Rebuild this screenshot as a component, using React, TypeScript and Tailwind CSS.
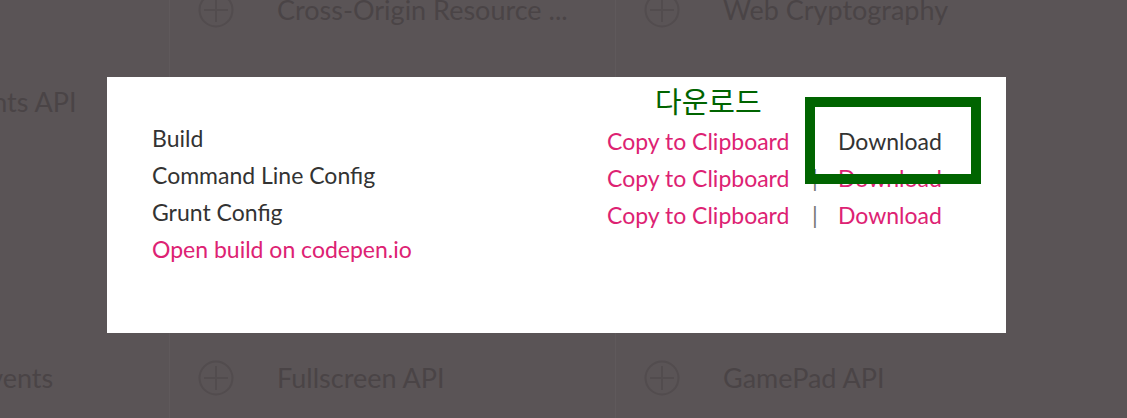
const TILES = [
  ["Vibration API", "Cross-Origin Resource ...", "Web Cryptography"],
  ["Proximity Events API", "Page Visibility", "Web Notifications"],
  ["Battery API", "Navigation Timing", "Web Audio API"],
  ["Clipboard API", "Resource Timing", "Web Sockets"],
  ["Server-sent Events", "Fullscreen API", "GamePad API"],
];

const ROWS = ["Build", "Command Line Config", "Grunt Config"];

const font = { fontFamily: "Lato, 'Noto Sans', sans-serif" };

function PlusCircle() {
  return (
    <svg width="36" height="36" viewBox="0 0 36 36" className="shrink-0">
      <circle cx="18" cy="18" r="16.5" fill="none" stroke="#524c4e" strokeWidth="2" />
      <path d="M18 6v24M6 18h24" stroke="#524c4e" strokeWidth="2" />
    </svg>
  );
}

function Tile({ label }: { label: string }) {
  return (
    <div className="h-[92px] flex items-center border-l border-[#5f595b] pl-[28px] gap-[43px]">
      <PlusCircle />
      <span className="text-[27px] text-[#4a4446] whitespace-nowrap">{label}</span>
    </div>
  );
}

export default function App() {
  return (
    <div className="relative w-[1127px] h-[418px] overflow-hidden bg-[#5a5456]" style={font}>
      <div className="-mt-[36px] -ml-[277px] grid grid-cols-[446px_446px_446px]">
        {TILES.flat().map((t, i) => (
          <Tile key={i} label={t} />
        ))}
      </div>

      <div className="absolute left-[107px] top-[77px] w-[899px] h-[256px] bg-white flex">
        <div className="pl-[45px] pt-[43px] w-[500px] text-[23px] leading-[37px] text-[#333]">
          {ROWS.map((r) => (
            <div key={r}>{r}</div>
          ))}
          <div className="text-[#dd2273]">Open build on codepen.io</div>
        </div>
        <div className="pt-[46px] text-[23px] leading-[37px]">
          {ROWS.map((r, i) => (
            <div key={r} className="flex">
              <span className="text-[#dd2273] w-[205px]">Copy to Clipboard</span>
              <span className={i === 0 ? "w-[26px] text-white" : "w-[26px] text-[#777]"}>|</span>
              <span className={i === 0 ? "text-[#333]" : "text-[#dd2273]"}>Download</span>
            </div>
          ))}
        </div>
      </div>

      <div
        className="absolute left-[655px] top-[82px] text-[29px] leading-[36px] text-[#006400]"
        style={{ fontFamily: "'Noto Sans CJK KR', sans-serif" }}
      >
        다운로드
      </div>
      <div className="absolute left-[805px] top-[97px] w-[176px] h-[87px] border-[10px] border-[#006400]" />
    </div>
  );
}
